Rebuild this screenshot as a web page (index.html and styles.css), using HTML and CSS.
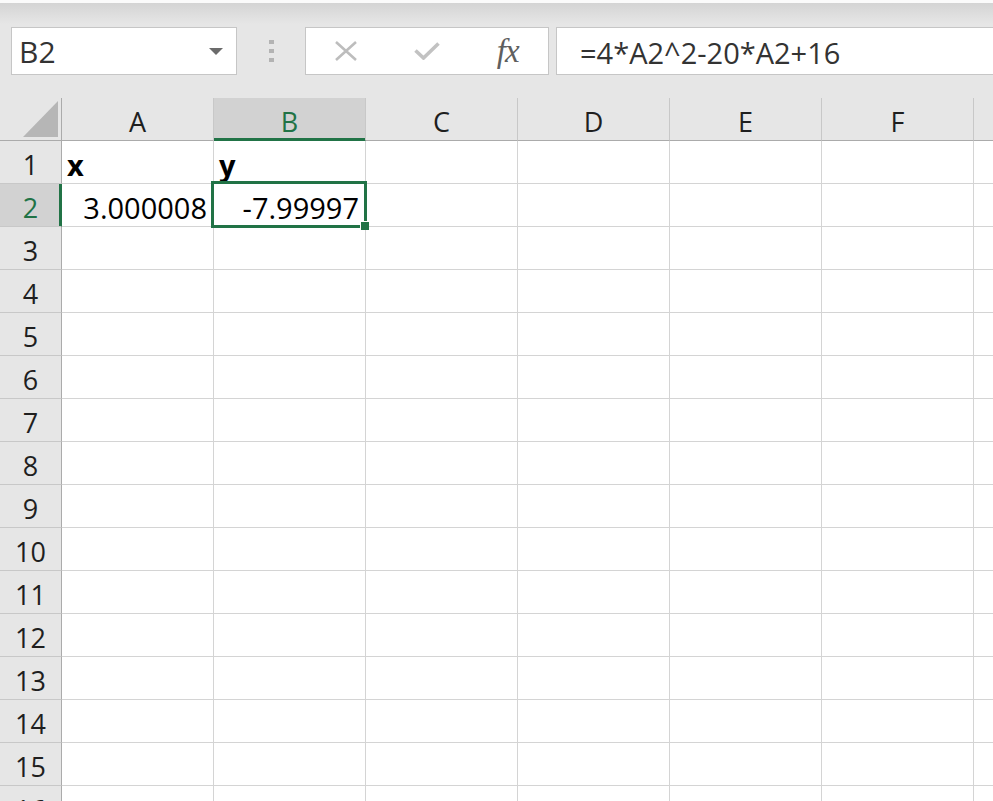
FILE: index.html
```html
<!DOCTYPE html>
<html lang="en">
<head>
  <meta charset="UTF-8" />
  <meta name="viewport" content="width=device-width, initial-scale=1.0"/>
  <title>Book1 - Excel</title>
  <link rel="stylesheet" href="styles.css">
</head>
<body>
  <!-- formula bar -->
  <div class="formula-bar">
    <div class="name-box">
      <span>B2</span>
      <svg class="caret" width="14" height="7" viewBox="0 0 14 7"><path d="M0 0 H14 L7 7 Z" fill="#6b6b6b"/></svg>
    </div>
    <div class="grip"><i></i><i></i><i></i></div>
    <div class="fx-buttons">
      <div class="slot">
        <svg width="22" height="20" viewBox="0 0 22 20"><path d="M1 1 L21 19 M21 1 L1 19" stroke="#bdbdbd" stroke-width="2.6" fill="none"/></svg>
      </div>
      <div class="slot">
        <svg width="26" height="18" viewBox="0 0 26 18"><path d="M1.5 8.5 L9.5 16 L24.5 1.5" stroke="#c2c2c2" stroke-width="3.6" fill="none"/></svg>
      </div>
      <div class="slot"><span class="fx">fx</span></div>
    </div>
    <div class="formula-input">=4*A2^2-20*A2+16</div>
  </div>

  <!-- sheet -->
  <div class="sheet">
    <div class="row head">
      <div class="corner"></div>
      <div class="ch">A</div>
      <div class="ch active">B</div>
      <div class="ch">C</div>
      <div class="ch">D</div>
      <div class="ch">E</div>
      <div class="ch">F</div>
      <div class="ch last"></div>
    </div>
    <div class="row">
      <div class="rh">1</div>
      <div class="cell bold">x</div>
      <div class="cell bold">y</div>
      <div class="cell"></div><div class="cell"></div><div class="cell"></div><div class="cell"></div><div class="cell last"></div>
    </div>
    <div class="row">
      <div class="rh active">2</div>
      <div class="cell num">3.000008</div>
      <div class="cell num">-7.99997</div>
      <div class="cell"></div><div class="cell"></div><div class="cell"></div><div class="cell"></div><div class="cell last"></div>
    </div>
    <div class="row">
      <div class="rh">3</div>
      <div class="cell"></div><div class="cell"></div><div class="cell"></div><div class="cell"></div><div class="cell"></div><div class="cell"></div><div class="cell last"></div>
    </div>
    <div class="row">
      <div class="rh">4</div>
      <div class="cell"></div><div class="cell"></div><div class="cell"></div><div class="cell"></div><div class="cell"></div><div class="cell"></div><div class="cell last"></div>
    </div>
    <div class="row">
      <div class="rh">5</div>
      <div class="cell"></div><div class="cell"></div><div class="cell"></div><div class="cell"></div><div class="cell"></div><div class="cell"></div><div class="cell last"></div>
    </div>
    <div class="row">
      <div class="rh">6</div>
      <div class="cell"></div><div class="cell"></div><div class="cell"></div><div class="cell"></div><div class="cell"></div><div class="cell"></div><div class="cell last"></div>
    </div>
    <div class="row">
      <div class="rh">7</div>
      <div class="cell"></div><div class="cell"></div><div class="cell"></div><div class="cell"></div><div class="cell"></div><div class="cell"></div><div class="cell last"></div>
    </div>
    <div class="row">
      <div class="rh">8</div>
      <div class="cell"></div><div class="cell"></div><div class="cell"></div><div class="cell"></div><div class="cell"></div><div class="cell"></div><div class="cell last"></div>
    </div>
    <div class="row">
      <div class="rh">9</div>
      <div class="cell"></div><div class="cell"></div><div class="cell"></div><div class="cell"></div><div class="cell"></div><div class="cell"></div><div class="cell last"></div>
    </div>
    <div class="row">
      <div class="rh">10</div>
      <div class="cell"></div><div class="cell"></div><div class="cell"></div><div class="cell"></div><div class="cell"></div><div class="cell"></div><div class="cell last"></div>
    </div>
    <div class="row">
      <div class="rh">11</div>
      <div class="cell"></div><div class="cell"></div><div class="cell"></div><div class="cell"></div><div class="cell"></div><div class="cell"></div><div class="cell last"></div>
    </div>
    <div class="row">
      <div class="rh">12</div>
      <div class="cell"></div><div class="cell"></div><div class="cell"></div><div class="cell"></div><div class="cell"></div><div class="cell"></div><div class="cell last"></div>
    </div>
    <div class="row">
      <div class="rh">13</div>
      <div class="cell"></div><div class="cell"></div><div class="cell"></div><div class="cell"></div><div class="cell"></div><div class="cell"></div><div class="cell last"></div>
    </div>
    <div class="row">
      <div class="rh">14</div>
      <div class="cell"></div><div class="cell"></div><div class="cell"></div><div class="cell"></div><div class="cell"></div><div class="cell"></div><div class="cell last"></div>
    </div>
    <div class="row">
      <div class="rh">15</div>
      <div class="cell"></div><div class="cell"></div><div class="cell"></div><div class="cell"></div><div class="cell"></div><div class="cell"></div><div class="cell last"></div>
    </div>
    <div class="row">
      <div class="rh">16</div>
      <div class="cell"></div><div class="cell"></div><div class="cell"></div><div class="cell"></div><div class="cell"></div><div class="cell"></div><div class="cell last"></div>
    </div>

    <!-- active cell B2 -->
    <div class="selection"></div>
  </div>
</body>
</html>
```

FILE: styles.css
```css
:root {
  --green: #217346;
  --panel: #e6e6e6;
  --head-line: #ababab;
  --grid: #d4d4d4;
}

* {
  box-sizing: border-box;
}

body {
  margin: 0;
  height: 801px;
  overflow: hidden;
  background: #fff;
  font-family: 'Open Sans', sans-serif;
  color: #000;
}

/* Formula bar */
.formula-bar {
  display: flex;
  align-items: flex-start;
  height: 98px;
  padding: 27px 0 0 11px;
  overflow: hidden;
  background: linear-gradient(#fbfbfb 0, #fbfbfb 3px, #d4d4d4 3px, #e6e6e6 24px, #e6e6e6 100%);
}

.name-box {
  display: flex;
  align-items: center;
  justify-content: space-between;
  width: 226px;
  height: 48px;
  padding: 0 13px 0 7px;
  background: #fff;
  border: 1px solid #c6c6c6;
  font-size: 30px;
  color: #333;
}

.grip {
  display: flex;
  flex-direction: column;
  align-items: center;
  gap: 5px;
  width: 68px;
  padding-top: 13px;
}

.grip i {
  display: block;
  width: 5px;
  height: 4px;
  background: #b3b3b3;
}

.fx-buttons {
  display: flex;
  width: 244px;
  height: 48px;
  background: #fff;
  border: 1px solid #c6c6c6;
}

.fx-buttons .slot {
  flex: 1;
  display: flex;
  align-items: center;
  justify-content: center;
}

.fx {
  font-family: 'Liberation Serif', serif;
  font-style: italic;
  font-size: 33px;
  color: #5f5f5f;
  letter-spacing: -1px;
}

.formula-input {
  flex: 1;
  height: 48px;
  margin: 0 -10px 0 7px;
  padding: 3px 0 0 23px;
  display: flex;
  align-items: center;
  background: #fff;
  border: 1px solid #c6c6c6;
  font-size: 29px;
  color: #333;
}

/* Sheet grid */
.sheet {
  position: relative;
}

.row {
  display: grid;
  grid-template-columns: 62px repeat(6, 152px) 1fr;
  height: 43px;
}

.corner {
  display: flex;
  justify-content: flex-end;
  align-items: flex-end;
  padding: 0 3px 3px 0;
  background: var(--panel);
  border-right: 1px solid var(--head-line);
  border-bottom: 1px solid var(--head-line);
}

.corner::after {
  content: "";
  width: 35px;
  height: 36px;
  background: #b6b6b6;
  clip-path: polygon(100% 0, 100% 100%, 0 100%);
}

.ch,
.rh {
  display: flex;
  align-items: center;
  justify-content: center;
  padding-top: 5px;
  background: var(--panel);
  font-size: 27px;
  line-height: 27px;
  color: #1f1f1f;
}

.ch {
  border-right: 1px solid #c8c8c8;
  border-bottom: 1px solid var(--head-line);
}

.ch.last {
  border-right: none;
}

.ch.active {
  background: #d2d2d2;
  color: var(--green);
  border-bottom-color: var(--green);
  box-shadow: inset 0 -2px 0 var(--green);
}

.rh {
  border-right: 1px solid var(--head-line);
  border-bottom: 1px solid #c8c8c8;
}

.rh.active {
  background: #d2d2d2;
  color: var(--green);
  border-right-color: var(--green);
  box-shadow: inset -2px 0 0 var(--green);
}

.cell {
  display: flex;
  align-items: flex-end;
  padding: 0 5px 4px;
  border-right: 1px solid var(--grid);
  border-bottom: 1px solid var(--grid);
  font-size: 29px;
  line-height: 29px;
  white-space: nowrap;
}

.cell.last {
  border-right: none;
}

.cell.bold {
  font-weight: bold;
}

.cell.num {
  justify-content: flex-end;
  padding-right: 6px;
}

/* Active cell outline */
.selection {
  position: absolute;
  left: 211px;
  top: 83px;
  width: 156px;
  height: 47px;
  border: 3px solid var(--green);
  pointer-events: none;
}

.selection::after {
  content: "";
  position: absolute;
  right: -5px;
  bottom: -5px;
  width: 8px;
  height: 8px;
  background: var(--green);
  border-left: 1px solid #fff;
  border-top: 1px solid #fff;
}
```
